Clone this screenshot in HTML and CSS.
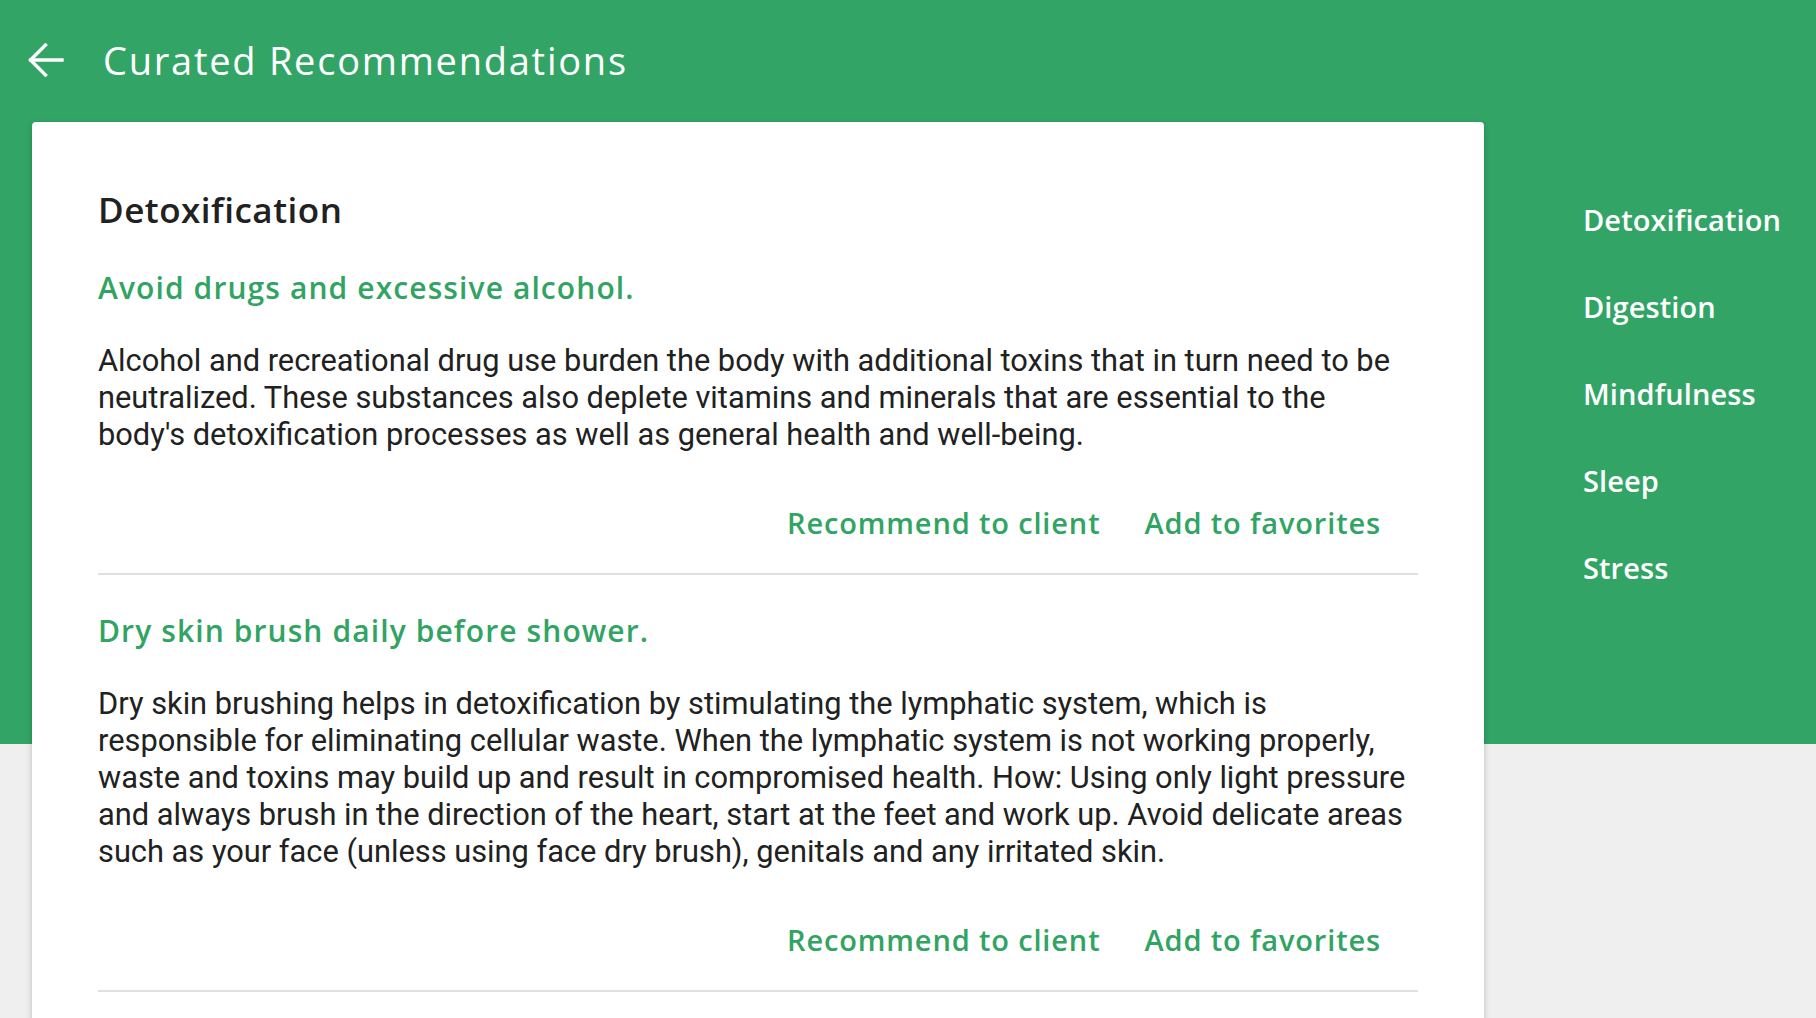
FILE: index.html
```html
<!DOCTYPE html>
<html lang="en">
<head>
  <meta charset="UTF-8">
  <meta name="viewport" content="width=device-width, initial-scale=1.0">
  <title>Curated Recommendations</title>
  <link rel="stylesheet" href="styles.css">
</head>
<body>
  <header class="topbar">
    <button class="back-btn" aria-label="Back">
      <svg width="36" height="34" viewBox="0 0 36 34" fill="none" stroke="#fff" stroke-width="3.4" stroke-linecap="square">
        <path d="M34 17H3"/>
        <path d="M17.5 2L2.5 17L17.5 32"/>
      </svg>
    </button>
    <h1 class="page-title">Curated Recommendations</h1>
  </header>

  <div class="layout">
    <main class="card">
      <h2 class="section-title">Detoxification</h2>

      <article class="rec">
        <h3 class="rec-title">Avoid drugs and excessive alcohol.</h3>
        <p class="rec-text">Alcohol and recreational drug use burden the body with additional toxins that in turn need to be neutralized. These substances also deplete vitamins and minerals that are essential to the body's detoxification processes as well as general health and well-being.</p>
        <div class="rec-actions">
          <button class="text-btn">Recommend to client</button>
          <button class="text-btn">Add to favorites</button>
        </div>
      </article>

      <article class="rec">
        <h3 class="rec-title">Dry skin brush daily before shower.</h3>
        <p class="rec-text">Dry skin brushing helps in detoxification by stimulating the lymphatic system, which is responsible for eliminating cellular waste. When the lymphatic system is not working properly, waste and toxins may build up and result in compromised health. How: Using only light pressure and always brush in the direction of the heart, start at the feet and work up. Avoid delicate areas such as your face (unless using face dry brush), genitals and any irritated skin.</p>
        <div class="rec-actions">
          <button class="text-btn">Recommend to client</button>
          <button class="text-btn">Add to favorites</button>
        </div>
      </article>
    </main>

    <nav class="side-nav">
      <a href="#" class="side-link">Detoxification</a>
      <a href="#" class="side-link">Digestion</a>
      <a href="#" class="side-link">Mindfulness</a>
      <a href="#" class="side-link">Sleep</a>
      <a href="#" class="side-link">Stress</a>
    </nav>
  </div>
</body>
</html>
```

FILE: styles.css
```css
body {
  margin: 0;
  font-family: Roboto, Arial, sans-serif;
  color: #212121;
  background: linear-gradient(#32a566 744px, #efefef 744px);
  min-height: 100vh;
}
.topbar {
  height: 120px;
  display: flex;
  align-items: center;
  padding-left: 28px;
}
.back-btn {
  background: none;
  border: none;
  padding: 0;
  display: flex;
  cursor: pointer;
}
.page-title {
  margin: 0 0 0 39px;
  font-family: "Open Sans", Arial, sans-serif;
  font-weight: 400;
  font-size: 38px;
  letter-spacing: 1.75px;
  color: #fff;
}
.layout {
  display: flex;
  margin-top: 2px;
  padding-left: 32px;
}
.card {
  width: 1452px;
  flex-shrink: 0;
  box-sizing: border-box;
  padding: 66px 66px 0;
  background: #fff;
  border-radius: 4px;
  box-shadow: 0 2px 6px rgba(0, 0, 0, 0.22);
  min-height: 960px;
}
.section-title {
  margin: 0;
  font-family: "Open Sans", Arial, sans-serif;
  font-weight: 600;
  font-size: 35px;
  line-height: 44px;
  letter-spacing: 0.5px;
}
.rec {
  padding: 36px 0 27px;
  border-bottom: 2px solid #e0e0e0;
}
.rec-title {
  margin: 0;
  font-family: "Open Sans", Arial, sans-serif;
  font-weight: 600;
  font-size: 30px;
  line-height: 40px;
  letter-spacing: 1.1px;
  color: #31a463;
}
.rec-text {
  margin: 34px 8px 0 0;
  font-size: 30.8px;
  line-height: 37px;
}
.rec-actions {
  display: flex;
  justify-content: flex-end;
  gap: 44px;
  margin-top: 45px;
  padding-right: 37px;
}
.text-btn {
  height: 48px;
  padding: 0;
  border: none;
  background: none;
  font-family: "Open Sans", Arial, sans-serif;
  font-weight: 600;
  font-size: 29px;
  letter-spacing: 0.85px;
  color: #31a463;
  cursor: pointer;
}
.side-nav {
  display: flex;
  flex-direction: column;
  padding: 54px 0 0 99px;
}
.side-link {
  line-height: 87px;
  font-family: "Open Sans", Arial, sans-serif;
  font-weight: 600;
  font-size: 29px;
  letter-spacing: 0.1px;
  color: #fff;
  text-decoration: none;
}
```
